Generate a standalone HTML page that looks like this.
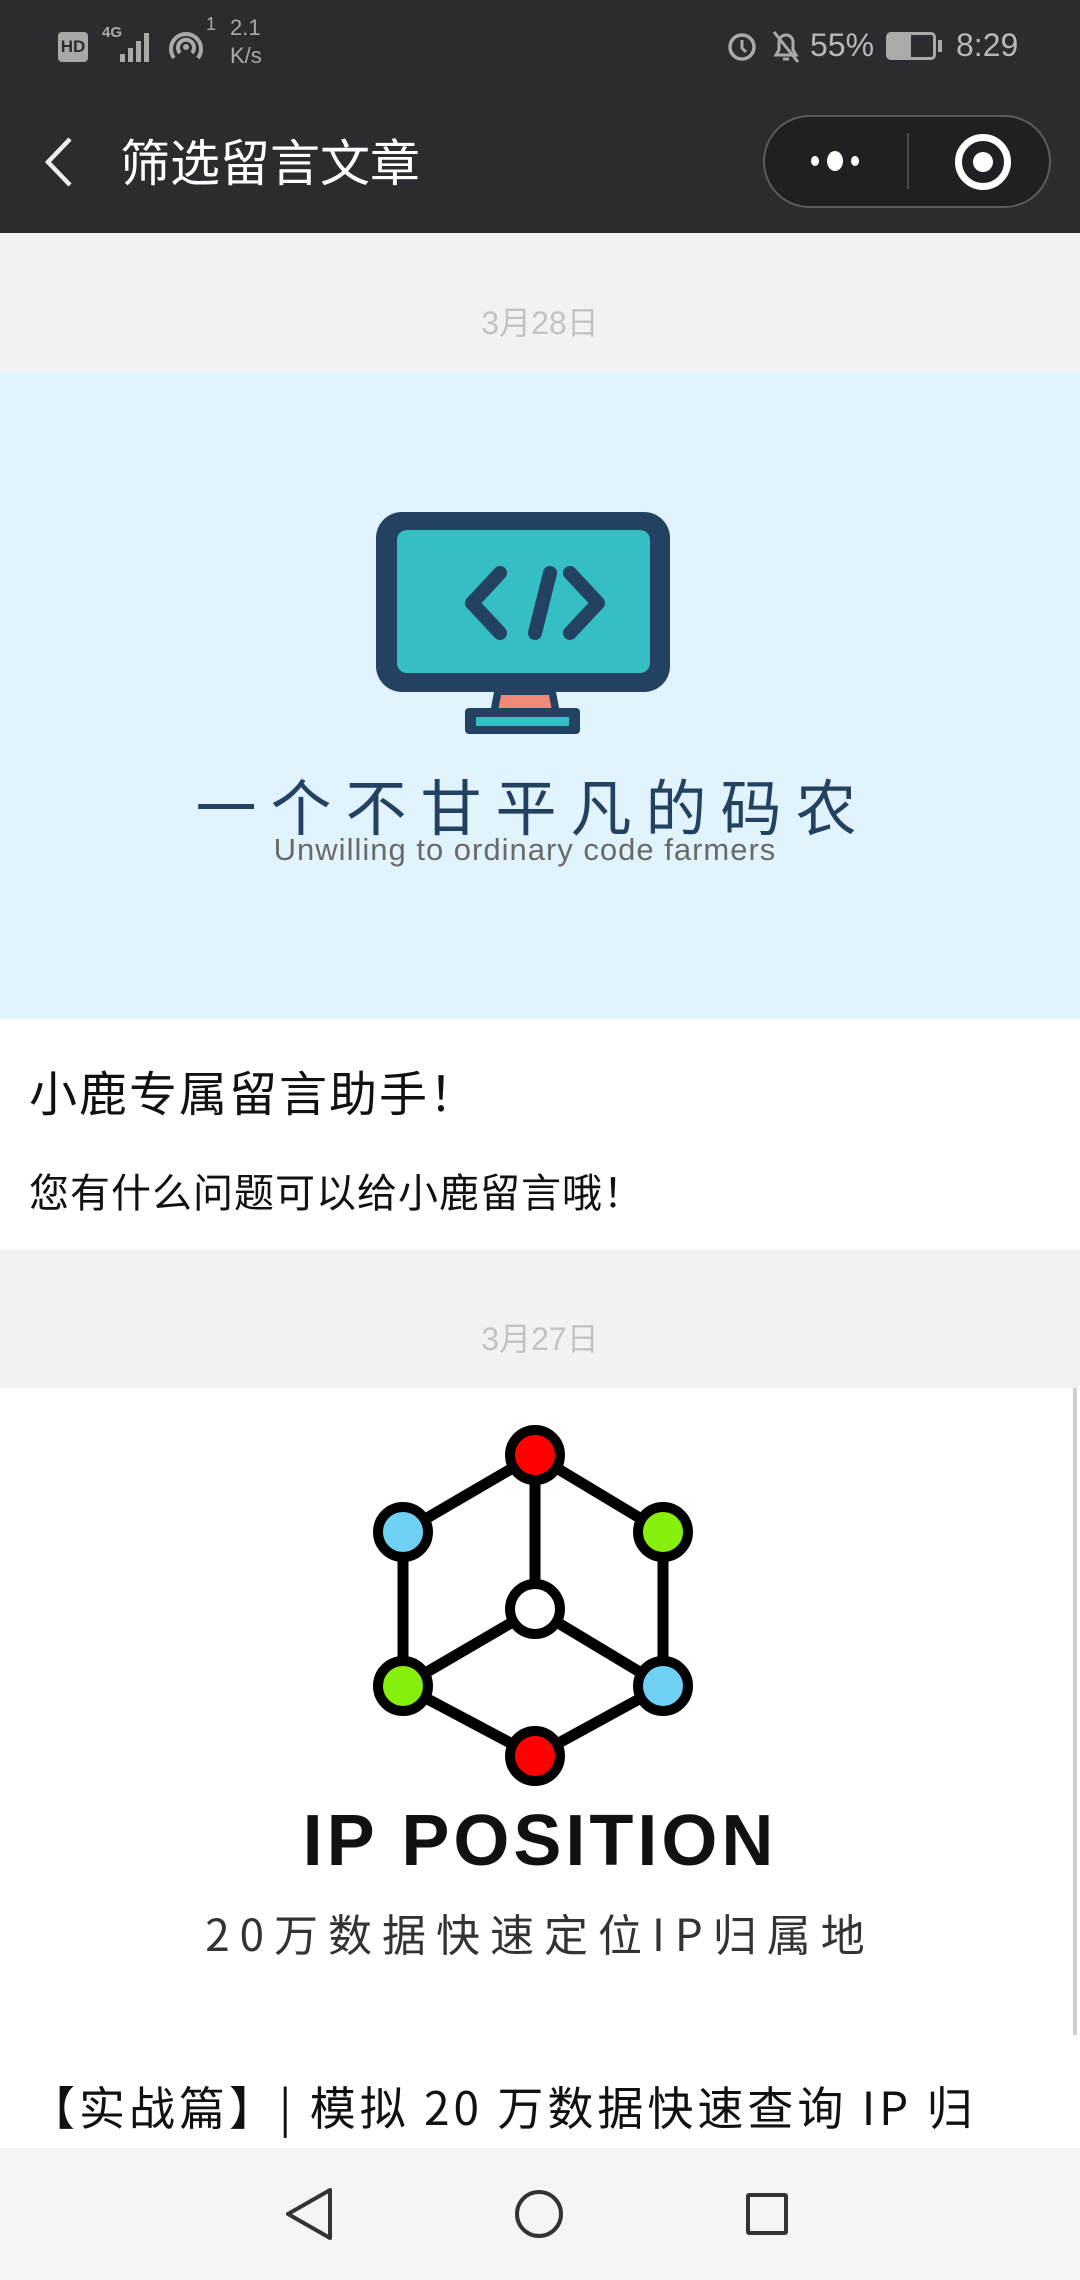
<!DOCTYPE html>
<html><head><meta charset="utf-8"><style>
*{margin:0;padding:0;box-sizing:border-box}
body{width:1080px;height:2280px;overflow:hidden;background:#f2f2f2;font-family:"Liberation Sans","Noto Sans CJK SC",sans-serif;position:relative}
.abs{position:absolute}
.sb{color:#b8b8b8;font-size:32px}
.cjk{font-family:"Noto Sans CJK SC","Liberation Sans",sans-serif}
</style></head><body>
<div class="abs" style="left:0;top:0;width:1080px;height:233px;background:#2b2c30"></div>
<!-- status bar -->
<div class="abs" style="left:58px;top:32px;width:30px;height:30px;background:#a8a8a8;border-radius:4px;color:#2b2c30;font-size:17px;font-weight:bold;line-height:30px;text-align:center">HD</div>
<div class="abs" style="left:102px;top:24px;color:#aaa;font-size:15px;font-weight:bold">4G</div>
<svg class="abs" style="left:100px;top:28px" width="60" height="36"><g fill="#aaa"><rect x="20" y="26" width="5" height="8"/><rect x="28" y="20" width="5" height="14"/><rect x="36" y="13" width="5" height="21"/><rect x="44" y="5" width="5" height="29"/></g></svg>
<svg class="abs" style="left:166px;top:28px" width="40" height="36"><g fill="none" stroke="#aaa" stroke-width="4"><path d="M8 30 A15 15 0 1 1 32 30"/><path d="M14 25 A8 8 0 1 1 26 25"/></g><circle cx="20" cy="19" r="3" fill="#aaa"/></svg>
<div class="abs" style="left:206px;top:14px;color:#aaa;font-size:18px">1</div>
<div class="abs" style="left:230px;top:14px;color:#aaa;font-size:22px;line-height:28px">2.1<br>K/s</div>
<svg class="abs" style="left:724px;top:28px" width="36" height="36"><circle cx="18" cy="19" r="12" fill="none" stroke="#aaa" stroke-width="3.5"/><path d="M18 12v8l4 4" stroke="#aaa" stroke-width="3" fill="none"/></svg>
<svg class="abs" style="left:768px;top:28px" width="36" height="38"><path d="M8 27h20l-3-5v-8a7 7 0 0 0-14 0v8z M15 31h6 M6 4l24 30" stroke="#aaa" stroke-width="3" fill="none"/></svg>
<div class="abs sb" style="left:810px;top:27px">55%</div>
<div class="abs" style="left:886px;top:32px;width:50px;height:28px;border:3px solid #aaa;border-radius:5px"><div style="width:22px;height:100%;background:#aaa"></div></div>
<div class="abs" style="left:938px;top:40px;width:4px;height:12px;background:#aaa"></div>
<div class="abs sb" style="left:956px;top:27px">8:29</div>
<!-- header -->
<svg class="abs" style="left:40px;top:136px" width="36" height="52"><path d="M30 3 L8 26 L30 49" stroke="#eee" stroke-width="4.5" fill="none"/></svg>
<div class="abs cjk" style="left:120px;top:128px;color:#fff;font-size:50px;line-height:64px">筛选留言文章</div>
<div class="abs" style="left:763px;top:115px;width:288px;height:93px;border:2px solid #5a5b5f;border-radius:47px;background:#1f2023"></div>
<div class="abs" style="left:907px;top:133px;width:2px;height:56px;background:#4a4b4f"></div>
<div class="abs" style="left:811px;top:156px;width:8px;height:10px;border-radius:50%;background:#fff"></div>
<div class="abs" style="left:827px;top:151px;width:16px;height:20px;border-radius:50%;background:#fff"></div>
<div class="abs" style="left:851px;top:156px;width:8px;height:10px;border-radius:50%;background:#fff"></div>
<div class="abs" style="left:955px;top:134px;width:56px;height:56px;border-radius:50%;border:7px solid #fff"></div>
<div class="abs" style="left:973px;top:152px;width:20px;height:20px;border-radius:50%;background:#fff"></div>
<!-- date 1 -->
<div class="abs" style="left:0;top:298px;width:1080px;text-align:center;color:#c3c3c3;font-size:32px">3月28日</div>
<!-- card 1 -->
<div class="abs" style="left:0;top:372px;width:1080px;height:647px;background:#e1f3fc"></div>
<svg class="abs" style="left:370px;top:505px" width="310" height="232">
<rect x="6" y="7" width="294" height="180" rx="26" fill="#234160"/>
<rect x="27" y="25" width="253" height="143" rx="10" fill="#35bfc5"/>
<path d="M130 68 L102 98 L130 128 M165 128 L180 68 M200 68 L228 98 L200 128" stroke="#234160" stroke-width="14" stroke-linecap="round" stroke-linejoin="round" fill="none"/>
<path d="M124 187 L120 208 L190 208 L186 187Z" fill="#234160"/><path d="M131 190 L128 206 L182 206 L179 190Z" fill="#f08a78"/>
<rect x="95" y="203" width="115" height="26" rx="4" fill="#234160"/><rect x="106" y="212" width="93" height="9" fill="#35bfc5"/>
</svg>
<div class="abs cjk" style="left:190px;top:772px;width:686px;text-align:center;color:#234160;font-size:61px;letter-spacing:14px;line-height:64px">一个不甘平凡的码农</div>
<div class="abs" style="left:210px;top:832px;width:630px;text-align:center;color:#6a6a6a;font-size:31px;letter-spacing:1px">Unwilling to ordinary code farmers</div>
<div class="abs" style="left:0;top:1019px;width:1080px;height:231px;background:#fff"></div>
<div class="abs cjk" style="left:29px;top:1058px;color:#111;font-size:48px;line-height:64px;letter-spacing:2px">小鹿专属留言助手！</div>
<div class="abs cjk" style="left:29px;top:1163px;color:#111;font-size:40px;line-height:54px;letter-spacing:1px">您有什么问题可以给小鹿留言哦！</div>
<!-- date 2 -->
<div class="abs" style="left:0;top:1314px;width:1080px;text-align:center;color:#c3c3c3;font-size:32px">3月27日</div>
<!-- card 2 -->
<div class="abs" style="left:0;top:1388px;width:1080px;height:892px;background:#fff"></div>
<div class="abs" style="left:1073px;top:1388px;width:4px;height:647px;background:#cfcfcf"></div>
<svg class="abs" style="left:360px;top:1420px" width="350" height="370">
<g stroke="#000" stroke-width="11" fill="none" transform="translate(-360,-1420)">
<path d="M535 1455 L403 1532 L403 1686 L535 1756 L663 1686 L663 1532 Z M535 1455 L535 1609 L403 1686 M535 1609 L663 1686"/>
</g>
<g stroke="#000" stroke-width="10" transform="translate(-360,-1420)">
<circle cx="535" cy="1455" r="25" fill="#f00"/><circle cx="403" cy="1532" r="25" fill="#6fd0f5"/><circle cx="663" cy="1532" r="25" fill="#86f00c"/>
<circle cx="535" cy="1609" r="25" fill="#fff"/><circle cx="403" cy="1686" r="25" fill="#86f00c"/><circle cx="663" cy="1686" r="25" fill="#6fd0f5"/><circle cx="535" cy="1756" r="25" fill="#f00"/>
</g></svg>
<div class="abs" style="left:0;top:1799px;width:1080px;text-align:center;color:#111;font-size:72px;font-weight:bold;letter-spacing:4px;line-height:84px">IP POSITION</div>
<div class="abs cjk" style="left:0;top:1902px;width:1080px;text-align:center;color:#333;font-size:44px;letter-spacing:10px;line-height:60px">20万数据快速定位IP归属地</div>
<div class="abs cjk" style="left:29px;top:2074px;color:#111;font-size:46px;line-height:64px;white-space:nowrap;letter-spacing:4px">【实战篇】| 模拟 20 万数据快速查询 IP 归</div>
<!-- nav bar -->
<div class="abs" style="left:0;top:2148px;width:1080px;height:132px;background:#f5f5f5"></div>
<svg class="abs" style="left:280px;top:2184px" width="60" height="60"><path d="M50 6 L8 30 L50 54 Z" stroke="#333" stroke-width="4" fill="none" stroke-linejoin="round"/></svg>
<div class="abs" style="left:515px;top:2190px;width:48px;height:48px;border:4px solid #333;border-radius:50%"></div>
<div class="abs" style="left:746px;top:2193px;width:42px;height:42px;border:4px solid #333;border-radius:3px"></div>
</body></html>
